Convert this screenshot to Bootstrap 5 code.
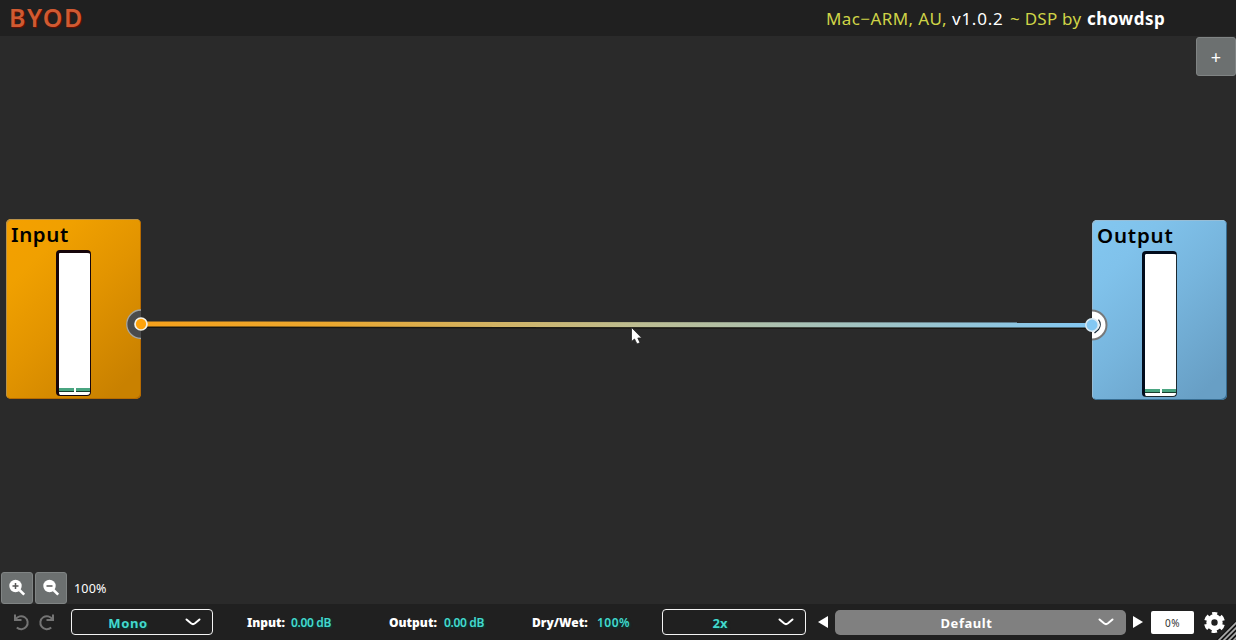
<!DOCTYPE html>
<html lang="en">
<head>
<meta charset="utf-8">
<meta name="viewport" content="width=device-width, initial-scale=1">
<title>BYOD</title>
<link href="https://cdn.jsdelivr.net/npm/bootstrap@5.3.0/dist/css/bootstrap.min.css" rel="stylesheet">
<style>
body{background:#2a2a2a;color:#fff;font-family:"Noto Sans","Open Sans",sans-serif;line-height:1;white-space:nowrap}
svg{display:block;flex:none}
.titlebar{height:36px;background:#202020}
.brand{font-size:25px;font-weight:600;color:#d05a32;padding:0 0 1px 9px;letter-spacing:1.400px;text-shadow:1px 1px 1px #6a1000}
.info{font-size:17px;width:410px;color:#cfd447}
.info span,.info b{display:block}
.info .i1{width:126px;letter-spacing:.4px}
.info .i2{width:58px;color:#fff;letter-spacing:.75px}
.info .i3{width:77px;letter-spacing:.25px}
.info b{color:#fff;font-weight:700;letter-spacing:.5px}
.tool{background:#6c7070;border:1px solid #808484;border-radius:3px;color:#fff;padding:0}
.tool:hover{background:#7b7f7f}
.add{width:40px;height:39px;top:37px;right:0;font-size:18px}
.board{height:568px}
.module{width:135px;height:180px;border-radius:5px;color:#000;overflow:hidden}
.module h2{font-size:20.5px;font-weight:600;margin:0;padding:4px 0 0 5px;line-height:22px;letter-spacing:.6px}
.in-mod{left:6px;top:183px;background:linear-gradient(135deg,#f5a000 0,#f0a000 22%,#e29400 50%,#c98100 90%);box-shadow:inset 1px 1px #b9924a,inset -1px -1px #b66a00}
.out-mod{left:1092px;top:184px;background:linear-gradient(135deg,#83c7f0 0,#80c2eb 22%,#77b5dd 50%,#689fc5 90%);box-shadow:inset 1px 1px #98bdd5,inset -1px -1px #386d91}
.out-mod h2{letter-spacing:.8px}
.meter{width:35px;height:146px;left:50px;top:31px;border-radius:4px;background:#fff;border:solid #16050a;border-width:3px 1px 1px 3px;gap:2px;padding-bottom:3px}
.out-mod .meter{border-color:#020c1c #1c2930 #1c2930 #020c1c}
.meter i{height:4px;background:#4aa581;border-bottom:1px solid #183d2e;flex:1}
.wires{left:0;top:0}
.zoombar{left:1px;bottom:0;height:32px;font-size:12.5px;gap:2px}
.zoombar .tool{width:32px;height:32px}
.zoombar .level{padding:3px 0 0 5px;letter-spacing:.2px}
.footbar{height:36px;background:#202020;font-size:13px;font-weight:600}
.teal{color:#43d9cd;text-shadow:1px 1px 2px #00403c}
.pick{height:26px;border:1px solid #f4f4f4;border-radius:4px;background:transparent;padding:1px 11px 0 0}
.pick .lbl{flex:1;text-align:center;padding:1px 1px 0 0}
.pick .lbl.mono{letter-spacing:.6px}
.preset{width:291px;height:25px;border:0;background:#808080;border-radius:5px;color:#fff;letter-spacing:.55px}
.preset .lbl{padding-top:2px}
.param{font-size:12px;padding-top:2px}
.param .val{letter-spacing:-.35px}
.param .val.pct{letter-spacing:.45px}
.cpu{width:43px;height:23px;background:#fff;color:#333;border-radius:2px;font-size:10px;padding-top:1px;font-weight:400;letter-spacing:.5px}
</style>
</head>
<body class="vh-100 overflow-hidden d-flex flex-column position-relative">
<header class="titlebar d-flex justify-content-between align-items-center">
  <div class="brand">BYOD</div>
  <div class="info d-flex"><span class="i1">Mac−ARM, AU,</span><span class="i2">v1.0.2</span><span class="i3">~ DSP by</span><b>chowdsp</b></div>
</header>
<button class="tool add position-absolute d-flex align-items-center justify-content-center" aria-label="Add module">+</button>
<main class="board position-relative">
  <section class="module in-mod position-absolute">
    <h2>Input</h2>
    <div class="meter position-absolute d-flex align-items-end"><i></i><i></i></div>
  </section>
  <section class="module out-mod position-absolute">
    <h2>Output</h2>
    <div class="meter position-absolute d-flex align-items-end"><i></i><i></i></div>
  </section>
  <svg class="wires position-absolute" width="1236" height="568" viewBox="0 36 1236 568">
    <defs><linearGradient id="cable" gradientUnits="userSpaceOnUse" x1="141" y1="0" x2="1092" y2="0"><stop stop-color="#f6a11b"/><stop offset=".2" stop-color="#eba82f"/><stop offset=".52" stop-color="#bdbd91"/><stop offset="1" stop-color="#83c8f3"/></linearGradient></defs>
    <path d="M141 310a14 14 0 0 0 0 28.500" fill="#4a4b4c" stroke="#a5a5a0" stroke-width="1.300"/>
    <path d="M1092 310.500a14.500 14.500 0 0 1 0 29" fill="#fff" stroke="#77797a" stroke-width="2"/>
    <path d="M1098.500 319.500a8 8 0 0 1 0 10l-4 3.500" fill="none" stroke="#152a3a" stroke-width="1.200"/>
    <path d="M141 326.500L1092 327.500" stroke="#171611" stroke-width="3"/>
    <path d="M141 324L1092 325" stroke="url(#cable)" stroke-width="5"/>
    <circle cx="141" cy="324" r="6" fill="#ffa30b" stroke="#f3f1e6" stroke-width="1.700"/>
    <circle cx="1092" cy="325" r="6.200" fill="#83c8f3" stroke="#d9eaf3" stroke-width="1.500"/>
    <path d="M631.500 327.500v14l3-2.500 2.500 5 3-1.300-2.200-4.700h4z" fill="#fff" stroke="#252525" stroke-width=".8"/>
  </svg>
  <div class="zoombar position-absolute d-flex align-items-center">
    <button class="tool d-flex align-items-center justify-content-center" aria-label="Zoom in"><svg width="18" height="18" viewBox="0 0 18 18"><circle cx="7.500" cy="7" r="6.200" fill="#fff"/><path d="M11.500 11l4.700 4.700" stroke="#fff" stroke-width="2.600"/><path d="M4.500 7h6M7.500 4v6" stroke="#555" stroke-width="1.500"/></svg></button>
    <button class="tool d-flex align-items-center justify-content-center" aria-label="Zoom out"><svg width="18" height="18" viewBox="0 0 18 18"><circle cx="7.500" cy="7" r="6.200" fill="#fff"/><path d="M11.500 11l4.700 4.700" stroke="#fff" stroke-width="2.600"/><path d="M4.500 7h6" stroke="#555" stroke-width="1.500"/></svg></button>
    <span class="level">100%</span>
  </div>
</main>
<footer class="footbar d-flex align-items-center position-relative">
  <svg width="71" height="36"><g fill="none" stroke="#747474" stroke-width="2"><path d="M15 10.500v5.500h6.500M15.500 15.500a6.500 6.500 0 1 1 1.300 8"/><path d="M53 10.500v5.500h-6.500M52.500 15.500a6.500 6.500 0 1 0-1.300 8"/></g></svg>
  <button class="pick teal d-flex align-items-center" style="width:142px"><b class="lbl mono">Mono</b><svg width="16" height="9"><path d="M1.500 1.500L6 5.300Q8 6.900 10 5.300L14.500 1.500" fill="none" stroke="#fff" stroke-width="2" stroke-linecap="round"/></svg></button>
  <div class="param d-flex" style="margin-left:34px;width:142px"><b style="width:44px">Input:</b><span class="val teal">0.00 dB</span></div>
  <div class="param d-flex" style="width:143px"><b style="width:55px">Output:</b><span class="val teal">0.00 dB</span></div>
  <div class="param d-flex" style="width:130px"><b style="width:65px">Dry/Wet:</b><span class="val pct teal">100%</span></div>
  <button class="pick teal d-flex align-items-center" style="width:144px"><b class="lbl">2x</b><svg width="16" height="9"><path d="M1.500 1.500L6 5.300Q8 6.900 10 5.300L14.500 1.500" fill="none" stroke="#fff" stroke-width="2" stroke-linecap="round"/></svg></button>
  <svg width="29" height="36"><path d="M12 18l10-6v12z" fill="#fff"/></svg>
  <button class="preset d-flex align-items-center p-0"><b class="lbl flex-fill text-center">Default</b><svg style="margin-right:12px" width="16" height="9"><path d="M1.500 1.500L6 5.300Q8 6.900 10 5.300L14.500 1.500" fill="none" stroke="#fff" stroke-width="2" stroke-linecap="round"/></svg></button>
  <svg width="25" height="36"><path d="M17 18L7 12v12z" fill="#fff"/></svg>
  <div class="cpu d-flex align-items-center justify-content-center">0%</div>
  <svg width="42" height="36"><circle cx="20.500" cy="18.500" r="5.700" fill="none" stroke="#fff" stroke-width="5"/><circle cx="20.500" cy="18.500" r="9" fill="none" stroke="#fff" stroke-width="3" stroke-dasharray="5.400 4.025" stroke-dashoffset="2.700" transform="rotate(-90 20.500 18.500)"/><path d="M24 37L43 18M29 37L43 23M34 37L43 28M39 37L43 33" stroke="#151515" stroke-width="4"/><path d="M24 37L43 18M29 37L43 23M34 37L43 28M39 37L43 33" stroke="#aaa" stroke-width="1.700"/></svg>
</footer>
<script src="https://cdn.jsdelivr.net/npm/bootstrap@5.3.0/dist/js/bootstrap.bundle.min.js"></script>
</body>
</html>
